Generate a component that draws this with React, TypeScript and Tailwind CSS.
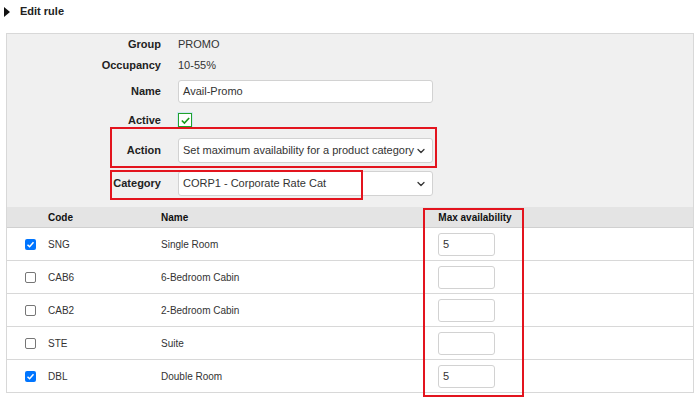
import { ChevronDown } from 'lucide-react'

const ROOMS = [
  { code: 'SNG', name: 'Single Room', checked: true, max: '5' },
  { code: 'CAB6', name: '6-Bedroom Cabin', checked: false, max: '' },
  { code: 'CAB2', name: '2-Bedroom Cabin', checked: false, max: '' },
  { code: 'STE', name: 'Suite', checked: false, max: '' },
  { code: 'DBL', name: 'Double Room', checked: true, max: '5' },
]

function Box({ checked }: { checked: boolean }) {
  if (checked) {
    return (
      <span className="w-[11px] h-[11px] rounded-[2px] bg-[#0075ff] flex items-center justify-center">
        <svg viewBox="0 0 12 12" className="w-[9px] h-[9px]">
          <path d="M2 6.3 L4.8 9 L10 3" fill="none" stroke="white" strokeWidth="2" />
        </svg>
      </span>
    )
  }
  return <span className="w-[11px] h-[11px] rounded-[2px] border border-[#767676] bg-white" />
}

function Select({ value }: { value: string }) {
  return (
    <div className="w-[255px] h-[25px] rounded-[3px] border border-[#d2d2d2] bg-white flex items-center justify-between pl-[4px] pr-[5px] text-[11px] text-[#333]">
      <span>{value}</span>
      <ChevronDown className="w-[12px] h-[12px] text-[#333]" strokeWidth={2.5} />
    </div>
  )
}

export default function App() {
  return (
    <div
      className="relative w-[700px] h-[402px] bg-white text-[#222]"
      style={{ fontFamily: '"Liberation Sans", Arial, sans-serif' }}
    >
      <div className="h-[23px] flex items-center pl-[4px] gap-[10px]">
        <svg viewBox="0 0 6 10" className="w-[6px] h-[10px]">
          <path d="M0 0 L6 5 L0 10 Z" fill="#111" />
        </svg>
        <span className="text-[11px] font-bold">Edit rule</span>
      </div>

      <div className="mt-[10px] mx-[6px] border border-[#d8d8d8]">
        <div className="bg-[#f0f0f0] pb-[8px] text-[11px]">
          <div className="h-[20px] flex items-center">
            <div className="w-[154px] text-right font-bold">Group</div>
            <div className="ml-[17px] text-[#333]">PROMO</div>
          </div>
          <div className="h-[22px] flex items-center">
            <div className="w-[154px] text-right font-bold">Occupancy</div>
            <div className="ml-[17px] text-[#333]">10-55%</div>
          </div>
          <div className="h-[31px] flex items-center">
            <div className="w-[154px] text-right font-bold">Name</div>
            <div className="ml-[17px] w-[255px] h-[23px] rounded-[3px] border border-[#d2d2d2] bg-white flex items-center pl-[4px] text-[#333]">
              Avail-Promo
            </div>
          </div>
          <div className="h-[26px] flex items-center">
            <div className="w-[154px] text-right font-bold">Active</div>
            <div className="ml-[17px] w-[14px] h-[14px] border border-[#22a22a] bg-white flex items-center justify-center shadow-[0_0_0_1px_#cfe6f5]">
              <svg viewBox="0 0 12 12" className="w-[11px] h-[11px]">
                <path d="M2 6 L4.8 8.8 L10 3.3" fill="none" stroke="#1b9a1b" strokeWidth="1.8" />
              </svg>
            </div>
          </div>
          <div className="h-[35px] flex items-center">
            <div className="w-[154px] text-right font-bold">Action</div>
            <div className="ml-[17px]">
              <Select value="Set maximum availability for a product category" />
            </div>
          </div>
          <div className="h-[31px] flex items-center">
            <div className="w-[154px] text-right font-bold">Category</div>
            <div className="ml-[17px]">
              <Select value="CORP1 - Corporate Rate Cat" />
            </div>
          </div>
        </div>

        <div className="text-[10px]">
          <div className="h-[21px] flex items-center bg-[#e4e4e4] border-b border-[#d0d0d0] font-bold text-[#111]">
            <div className="w-[41px]" />
            <div className="w-[113px]">Code</div>
            <div className="w-[264px]">Name</div>
            <div className="w-[100px] text-center">Max availability</div>
          </div>
          {ROOMS.map((r, i) => (
            <div
              key={r.code}
              className={`flex items-center bg-white text-[#333] ${i < ROOMS.length - 1 ? 'h-[33px] border-b border-[#d8d8d8]' : 'h-[32px]'}`}
            >
              <div className="w-[41px] pl-[18px] flex items-center">
                <Box checked={r.checked} />
              </div>
              <div className="w-[113px]">{r.code}</div>
              <div className="w-[264px]">{r.name}</div>
              <div className="w-[100px] pl-[13px]">
                <div className="w-[57px] h-[23px] rounded-[3px] border border-[#d2d2d2] bg-white flex items-center pl-[4px] text-[11px]">
                  {r.max}
                </div>
              </div>
            </div>
          ))}
        </div>
      </div>

      <div className="absolute left-[110px] top-[127px] w-[327px] h-[41px] border-2 border-[#e3141e]" />
      <div className="absolute left-[110px] top-[170px] w-[253px] h-[30px] border-2 border-[#e3141e]" />
      <div className="absolute left-[423px] top-[208px] w-[101px] h-[189px] border-2 border-[#e3141e]" />
    </div>
  )
}
